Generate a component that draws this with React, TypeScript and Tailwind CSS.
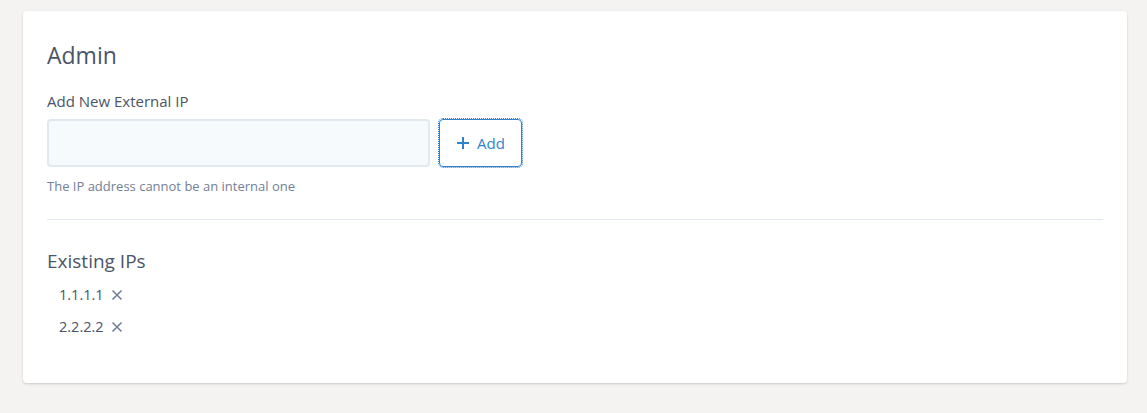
import React from "react";

function XIcon() {
  return (
    <svg width="12" height="12" viewBox="0 0 12 12" className="text-[#718096]">
      <path d="M1.5 1.5 L10.5 10.5 M10.5 1.5 L1.5 10.5" stroke="currentColor" strokeWidth="1.6" strokeLinecap="butt" />
    </svg>
  );
}

export default function App() {
  const ips = ["1.1.1.1", "2.2.2.2"];
  return (
    <div className="min-h-[413px] w-full bg-[#f4f3f2] pt-[11px] pl-[23px] pr-[20px] pb-[30px] font-['Open_Sans','Noto_Sans',sans-serif]">
      <div className="w-[1104px] rounded-[4px] bg-white px-[24px] pt-[28px] pb-[40px] shadow-[0_1px_3px_rgba(0,0,0,0.12),0_1px_2px_rgba(0,0,0,0.06)]">
        <h2 className="text-[23px] leading-[32px] text-[#4a5568]">Admin</h2>
        <label className="mt-[20px] block text-[15px] leading-[20px] text-[#4a5568]">Add New External IP</label>
        <div className="mt-[8px] flex items-start gap-[9px]">
          <input className="h-[48px] w-[383px] rounded-[4px] border-2 border-[#e2e8f0] bg-[#f7fafc] px-3 outline-none" />
          <button className="flex h-[48px] w-[83px] items-center justify-center gap-[7px] rounded-[4px] border border-[#3182ce] text-[15px] text-[#3182ce] outline-dotted outline-1 outline-[#3182ce]">
            <svg width="14" height="14" viewBox="0 0 14 14">
              <path d="M7 1 V13 M1 7 H13" stroke="currentColor" strokeWidth="2" />
            </svg>
            <span>Add</span>
          </button>
        </div>
        <p className="mt-[10px] text-[13px] leading-[18px] text-[#718096]">The IP address cannot be an internal one</p>
        <hr className="mt-[24px] border-0 border-t border-[#e2e8f0]" />
        <h3 className="mt-[27px] text-[19px] leading-[28px] text-[#4a5568]">Existing IPs</h3>
        <ul className="mt-[4px] pl-[12px]">
          {ips.map((ip) => (
            <li key={ip} className="flex h-[32px] items-center gap-[7px] text-[14.5px] text-[#4a5568]">
              <span>{ip}</span>
              <XIcon />
            </li>
          ))}
        </ul>
      </div>
    </div>
  );
}
